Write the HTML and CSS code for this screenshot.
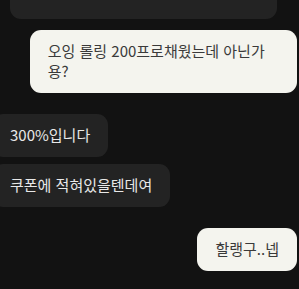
FILE: index.html
```html
<!DOCTYPE html>
<html lang="ko">

<head>
     <meta charset="UTF-8" />
     <title>Chat</title>
     <meta name="viewport" content="width=device-width, initial-scale=1" />
     <link rel="stylesheet" href="styles.css">
</head>

<body>
     <div class="chat">
          <div class="bubble other top-card"></div>

          <div class="bubble mine">오잉 롤링 200프로채웠는데 아닌가용?</div>

          <div class="bubble other group-start">300%입니다</div>
          <div class="bubble other">쿠폰에 적혀있을텐데여</div>

          <div class="bubble mine group-start">할랭구..넵</div>
     </div>
</body>

</html>
```

FILE: styles.css
```css
* {
     box-sizing: border-box;
     margin: 0;
     padding: 0;
}

body {
     font-family: "Noto Sans CJK KR", "Noto Sans", sans-serif;
     background: #121212;
     font-size: 15px;
     overflow: hidden;
}

.chat {
     display: flex;
     flex-direction: column;
     padding-right: 2px;
}

.bubble {
     max-width: 90%;
     margin-top: 7px;
     padding: 11px 18px 12px;
     line-height: 20px;
     border-radius: 11px;
}

.group-start {
     margin-top: 21px;
}

.other {
     align-self: flex-start;
     background: #232323;
     color: #e8e8e8;
     margin-left: -8px;
}

.mine {
     align-self: flex-end;
     background: #f4f4ee;
     color: #3a3a3a;
}

.top-card {
     width: 269px;
     height: 19px;
     margin: 0 0 4px 10px;
     border-radius: 0 0 11px 11px;
     padding: 0;
}
```
